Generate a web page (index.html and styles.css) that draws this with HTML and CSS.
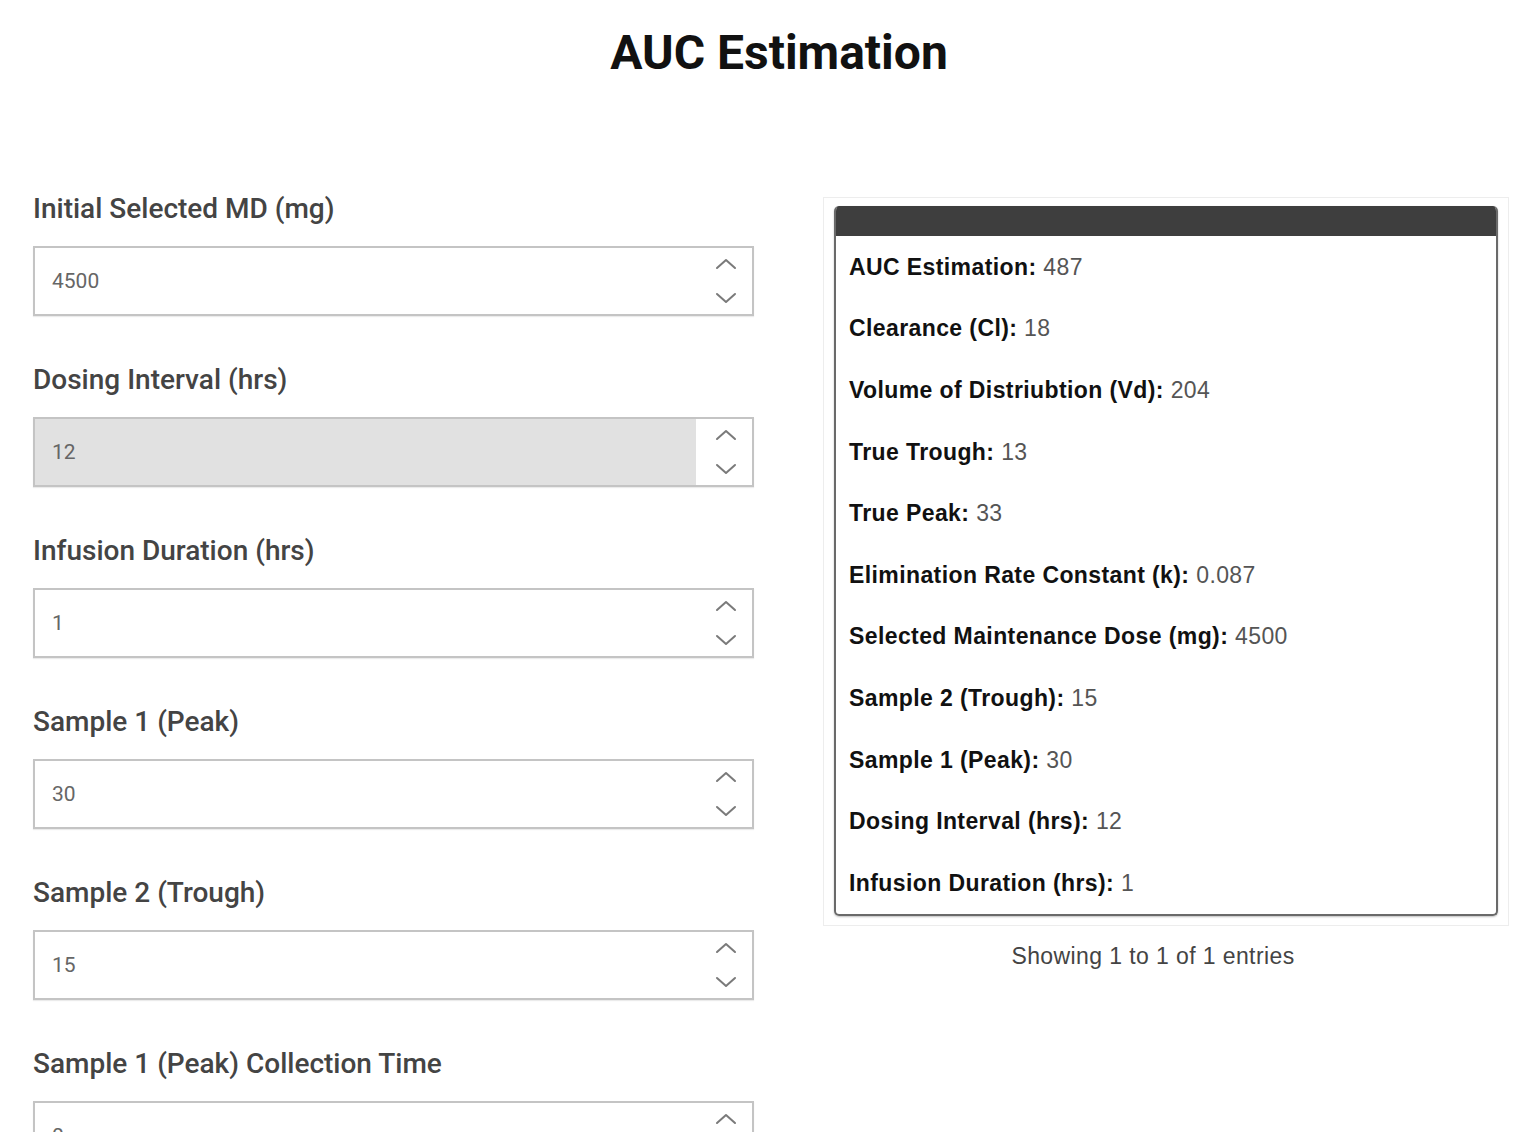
FILE: index.html
```html
<!DOCTYPE html>
<html lang="en">
<head>
    <meta charset="UTF-8">
    <meta name="viewport" content="width=device-width, initial-scale=1.0">
    <title>AUC Estimation</title>
    <link rel="stylesheet" href="styles.css">
</head>
<body>

    <h1 class="title">AUC Estimation</h1>

    <div class="layout">

        <div class="inputs">
            <label class="field-label">Initial Selected MD (mg)</label>
            <div class="num-input">
                <input type="text" value="4500">
                <span class="spin">
                    <svg width="22" height="14" viewBox="0 0 22 14"><path d="M2 11 L11 3 L20 11"/></svg>
                    <svg width="22" height="14" viewBox="0 0 22 14"><path d="M2 3 L11 11 L20 3"/></svg>
                </span>
            </div>

            <label class="field-label">Dosing Interval (hrs)</label>
            <div class="num-input disabled">
                <input type="text" value="12" disabled>
                <span class="spin">
                    <svg width="22" height="14" viewBox="0 0 22 14"><path d="M2 11 L11 3 L20 11"/></svg>
                    <svg width="22" height="14" viewBox="0 0 22 14"><path d="M2 3 L11 11 L20 3"/></svg>
                </span>
            </div>

            <label class="field-label">Infusion Duration (hrs)</label>
            <div class="num-input">
                <input type="text" value="1">
                <span class="spin">
                    <svg width="22" height="14" viewBox="0 0 22 14"><path d="M2 11 L11 3 L20 11"/></svg>
                    <svg width="22" height="14" viewBox="0 0 22 14"><path d="M2 3 L11 11 L20 3"/></svg>
                </span>
            </div>

            <label class="field-label">Sample 1 (Peak)</label>
            <div class="num-input">
                <input type="text" value="30">
                <span class="spin">
                    <svg width="22" height="14" viewBox="0 0 22 14"><path d="M2 11 L11 3 L20 11"/></svg>
                    <svg width="22" height="14" viewBox="0 0 22 14"><path d="M2 3 L11 11 L20 3"/></svg>
                </span>
            </div>

            <label class="field-label">Sample 2 (Trough)</label>
            <div class="num-input">
                <input type="text" value="15">
                <span class="spin">
                    <svg width="22" height="14" viewBox="0 0 22 14"><path d="M2 11 L11 3 L20 11"/></svg>
                    <svg width="22" height="14" viewBox="0 0 22 14"><path d="M2 3 L11 11 L20 3"/></svg>
                </span>
            </div>

            <label class="field-label">Sample 1 (Peak) Collection Time</label>
            <div class="num-input">
                <input type="text" value="0">
                <span class="spin">
                    <svg width="22" height="14" viewBox="0 0 22 14"><path d="M2 11 L11 3 L20 11"/></svg>
                    <svg width="22" height="14" viewBox="0 0 22 14"><path d="M2 3 L11 11 L20 3"/></svg>
                </span>
            </div>
        </div>

        <div class="results">
            <div class="results-frame">
                <div class="results-card">
                    <div class="card-head"></div>
                    <div class="row"><b>AUC Estimation:</b> 487</div>
                    <div class="row"><b>Clearance (Cl):</b> 18</div>
                    <div class="row"><b>Volume of Distriubtion (Vd):</b> 204</div>
                    <div class="row"><b>True Trough:</b> 13</div>
                    <div class="row"><b>True Peak:</b> 33</div>
                    <div class="row"><b>Elimination Rate Constant (k):</b> 0.087</div>
                    <div class="row"><b>Selected Maintenance Dose (mg):</b> 4500</div>
                    <div class="row"><b>Sample 2 (Trough):</b> 15</div>
                    <div class="row"><b>Sample 1 (Peak):</b> 30</div>
                    <div class="row"><b>Dosing Interval (hrs):</b> 12</div>
                    <div class="row"><b>Infusion Duration (hrs):</b> 1</div>
                </div>
            </div>
            <div class="info">Showing 1 to 1 of 1 entries</div>
        </div>

    </div>

</body>
</html>
```

FILE: styles.css
```css
body {
    margin: 0;
    font-family: Roboto, "Liberation Sans", sans-serif;
    color: #333;
    background-color: #fff;
    overflow: hidden;
}

.title {
    margin: 25px 0 111px;
    padding-left: 22px;
    font-size: 48px;
    line-height: 56px;
    font-weight: 700;
    text-align: center;
    color: #111;
}

.layout {
    display: grid;
    grid-template-columns: 721px 686px;
    column-gap: 69px;
    padding-left: 33px;
    align-items: start;
}

/* left column: number inputs */
.inputs {
    display: flex;
    flex-direction: column;
}

.field-label {
    display: block;
    font-size: 28px;
    line-height: 34px;
    font-weight: 500;
    color: #444;
    margin-bottom: 20px;
}

.num-input {
    display: flex;
    height: 70px;
    box-sizing: border-box;
    border: 2px solid #c4c4c4;
    background: #fff;
    margin-bottom: 47px;
    box-shadow: 0 1px 1px rgba(0, 0, 0, 0.08);
}

.num-input input {
    flex: 1;
    min-width: 0;
    border: none;
    outline: none;
    background: transparent;
    padding: 0 0 0 17px;
    font-family: Roboto, sans-serif;
    font-size: 21px;
    color: #666;
}

.num-input.disabled input {
    background: #e1e1e1;
}

.spin {
    width: 52px;
    display: flex;
    flex-direction: column;
    align-items: center;
    justify-content: space-between;
    padding: 9px 0 9px 4px;
    background: #fff;
}

.spin svg path {
    fill: none;
    stroke: #7a7a7a;
    stroke-width: 2;
    stroke-linecap: round;
    stroke-linejoin: round;
}

/* right column: results table */
.results {
    margin-top: 5px;
    font-family: "Liberation Sans", Arial, sans-serif;
}

.results-frame {
    border: 1px solid #ededed;
    padding: 8px 10px 9px;
}

.results-card {
    border: 2px solid #6a6a6a;
    border-top: none;
    border-radius: 5px;
    overflow: hidden;
    box-shadow: 0 1px 2px rgba(0, 0, 0, 0.25);
}

.card-head {
    height: 30px;
    background-color: #3e3e3e;
}

.row {
    padding: 15.8px 13px;
    font-size: 23px;
    line-height: 30px;
    letter-spacing: 0.4px;
    color: #555;
}

.row b {
    color: #111;
}

.info {
    margin-top: 17px;
    padding-right: 26px;
    text-align: center;
    font-size: 23px;
    letter-spacing: 0.4px;
    color: #444;
}
```
